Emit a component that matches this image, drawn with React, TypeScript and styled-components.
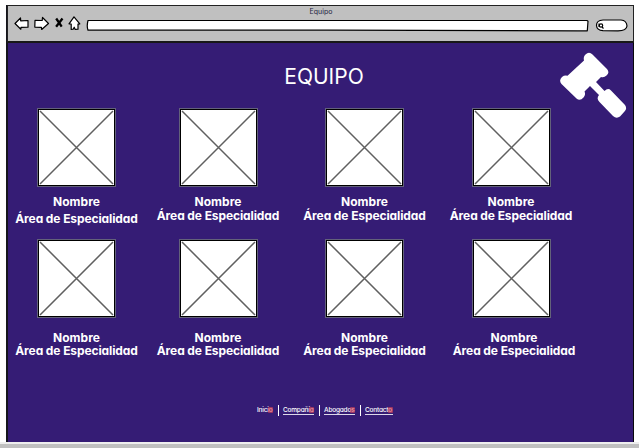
import React from "react";
import styled, { createGlobalStyle } from "styled-components";

const GlobalStyle = createGlobalStyle`
  * { box-sizing: border-box; }
  body { margin: 0; background: #fff; overflow: hidden; }
`;

const Page = styled.div`
  width: 639px;
  height: 448px;
  padding-top: 5px;
  display: flex;
  flex-direction: column;
  font-family: Inter, "Open Sans", sans-serif;
  font-feature-settings: "cv11";
  color: #fff;
`;

const Browser = styled.div`
  width: 628px;
  height: 437px;
  margin-left: 6px;
  border: solid #08080c;
  border-width: 0 1px;
  border-left: 2px solid #15151c;
  background: #351c75;
  display: flex;
  flex-direction: column;
`;

const Chrome = styled.header`
  height: 38px;
  flex: none;
  margin: 0 -1px;
  border: 1px solid #222;
  border-bottom: 2px solid #181818;
  background: #c0c0c0;
`;

const WindowTitle = styled.div`
  height: 13px;
  padding-left: 1px;
  line-height: 12px;
  font-size: 7px;
  text-align: center;
  color: #1d2340;
`;

const Toolbar = styled.div`
  display: flex;
  align-items: flex-start;
  padding-left: 5px;
  svg { display: block; flex: none; margin-top: -5px; }
`;

const Content = styled.main`
  flex: 1;
  display: flex;
  flex-direction: column;
  position: relative;
`;

const Title = styled.h1`
  margin: 20px 0 0 7px;
  height: 45px;
  line-height: 27px;
  font-size: 21px;
  font-weight: 400;
  text-align: center;
`;

const Gavel = styled.svg`
  position: absolute;
  top: 8px;
  right: 5px;
`;

const Team = styled.section`
  display: grid;
  grid-template-columns: 137px 146px 147px 146px;
  grid-template-rows: 131px 131px;
`;

const Member = styled.article`
  display: flex;
  flex-direction: column;
  align-items: center;
  text-align: center;
  white-space: nowrap;
`;

const Photo = styled.svg`
  display: block;
  flex: none;
`;

const Caption = styled.div<{ $gap: number; $leading: number; $shift: number }>`
  margin-top: ${(p) => p.$gap}px;
  transform: translateX(${(p) => p.$shift}px);
  font-size: 12px;
  font-weight: 700;
  line-height: ${(p) => p.$leading}px;
  letter-spacing: -0.1px;
`;

const Name = styled.div`
  letter-spacing: 0;
`;

const Area = styled.div``;

const Footer = styled.nav`
  display: flex;
  align-items: center;
  margin: 34px 0 0 249px;
  height: 12px;
  font-size: 6.5px;
  font-weight: 500;
  line-height: 8px;
`;

const Item = styled.a<{ $width: number; $plain?: boolean }>`
  width: ${(p) => p.$width}px;
  height: 9px;
  border-bottom: 1px solid ${(p) => (p.$plain ? "transparent" : "#ddd8e9")};
  letter-spacing: -0.2px;
  white-space: nowrap;
  position: relative;
`;

const Marker = styled.i`
  position: absolute;
  right: 0;
  top: 1px;
  width: 5px;
  height: 6px;
  border-radius: 1px;
  background: rgba(224, 70, 88, 0.6);
`;

const Divider = styled.span`
  width: 1px;
  height: 11px;
  margin: 0 4px 0 5px;
  background: #fff;
`;

const Base = styled.div`
  height: 6px;
  background: #c0c0c0;
  border-top: 2px solid #eee;
`;

const members = [
  { gap: 6, leading: 17, shift: 0 },
  { gap: 8, leading: 14, shift: 0 },
  { gap: 8, leading: 14, shift: 0 },
  { gap: 8, leading: 14, shift: 0 },
  { gap: 13, leading: 13, shift: 0 },
  { gap: 13, leading: 13, shift: 0 },
  { gap: 13, leading: 13, shift: 0 },
  { gap: 13, leading: 13, shift: 3 },
];

const links = [
  { label: "Inicio", width: 16, plain: true },
  { label: "Compañía", width: 31 },
  { label: "Abogados", width: 31 },
  { label: "Contacto", width: 28 },
];

function Controls() {
  return (
    <svg width="617" height="22" viewBox="13 14 617 22" fill="#fff" stroke="#000" strokeWidth="1.2" strokeLinejoin="round">
      <path d="M15 23.5 20.5 18l.2 2.8 7.3-.3v6.7l-7 .2-.2 1.8z" />
      <path d="M48.5 23.5 42.5 17.5l-.3 3-7.200-.1-.2 6.700 6.600.2.3 2.200z" />
      <path d="M56.200 18.500 61.700 26.600M62.500 18.500 56.100 26.800" strokeWidth="2.300" fill="none" />
      <path d="M74 16.800 69 23.800l2.200.2v5.400l2-.2 1-2 1 2.300 2.800-.3v-5l1.800-.4z" />
      <path d="M88 20.500H587l1 .8-.7 9.500-9.300.1-250-.7H88q-1.500-4 0-9.700z" />
      <path d="M603 20q-6.500.3-6.500 5.500.3 4.800 6.500 5.200l15 .2q8.500-.2 9-4.900-.3-5.500-6-6z" />
      <circle cx="601" cy="25.500" r="1.700" />
      <path d="M599 23.500v3.500M602 27l1.500 1.500" fill="none" />
    </svg>
  );
}

function Placeholder() {
  return (
    <Photo width="79" height="79" viewBox="0 0 79 79">
      <rect x=".5" y=".5" width="78" height="78" fill="none" stroke="#63617a" />
      <rect x="1.500" y="1.500" width="76" height="76" fill="#fff" stroke="#000" />
      <path d="M3 3 76 76M76 3 3 76" stroke="#606060" strokeWidth="1.500" />
    </Photo>
  );
}

export default function App() {
  return (
    <>
      <GlobalStyle />
      <Page>
        <Browser>
          <Chrome>
            <WindowTitle>Equipo</WindowTitle>
            <Toolbar>
              <Controls />
            </Toolbar>
          </Chrome>
          <Content>
            <Title>EQUIPO</Title>
            <Gavel width="70" height="70" viewBox="558 51 70 70" fill="#fff">
              <path d="M585.500 54.500q3.500-3.300 7 0L607 69q3 3.500-.5 6.500-2.500 2.500-5.500 1.500l-5 5 8.500 9q3.500-3.500 6.500-.5l14 14.500q2.500 3.500-.5 6.500l-4.500 5q-3.500 2.500-7-.5L599.500 102q-3.500-3.500-.5-7l-9-9-5.500 5.500q1.500 3-1 6-3.500 4-7 1L561.500 84q-3-3.500.5-7 2.500-2 5.500-1.200L584 60.500q-1-3.500 1.500-6z" />
            </Gavel>
            <Team>
              {members.map((m, i) => (
                <Member key={i}>
                  <Placeholder />
                  <Caption $gap={m.gap} $leading={m.leading} $shift={m.shift}>
                    <Name>Nombre</Name>
                    <Area>Área de Especialidad</Area>
                  </Caption>
                </Member>
              ))}
            </Team>
            <Footer>
              {links.map((l, i) => (
                <React.Fragment key={l.label}>
                  {i > 0 && <Divider />}
                  <Item $width={l.width} $plain={l.plain}>
                    {l.label}
                    <Marker />
                  </Item>
                </React.Fragment>
              ))}
            </Footer>
          </Content>
        </Browser>
        <Base />
      </Page>
    </>
  );
}
